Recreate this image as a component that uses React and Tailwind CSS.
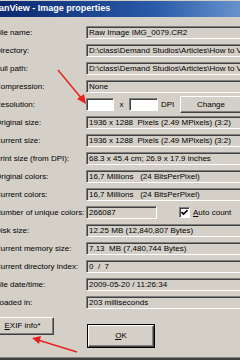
import React from 'react';

const rows = [
  { label: 'File name:', value: 'Raw Image IMG_0079.CR2' },
  { label: 'Directory:', value: 'D:\\class\\Demand Studios\\Articles\\How to View EXIF Data\\' },
  { label: 'Full path:', value: 'D:\\class\\Demand Studios\\Articles\\How to View EXIF Data\\IMG_0079.CR2' },
  { label: 'Compression:', value: 'None' },
  { label: 'Resolution:', type: 'dpi' },
  { label: 'Original size:', value: '1936 x 1288  Pixels (2.49 MPixels) (3:2)' },
  { label: 'Current size:', value: '1936 x 1288  Pixels (2.49 MPixels) (3:2)' },
  { label: 'Print size (from DPI):', value: '68.3 x 45.4 cm; 26.9 x 17.9 inches' },
  { label: 'Original colors:', value: '16,7 Millions   (24 BitsPerPixel)' },
  { label: 'Current colors:', value: '16,7 Millions   (24 BitsPerPixel)' },
  { label: 'Number of unique colors:', type: 'unique' },
  { label: 'Disk size:', value: '12.25 MB (12,840,807 Bytes)' },
  { label: 'Current memory size:', value: '7.13  MB (7,480,744 Bytes)' },
  { label: 'Current directory index:', value: '0  /  7' },
  { label: 'File date/time:', value: '2009-05-20 / 11:26:34' },
  { label: 'Loaded in:', value: '203 milliseconds' },
];

const sunken =
  'h-[13px] border border-t-[#808080] border-l-[#808080] border-b-white border-r-white shadow-[inset_1px_1px_0_#404040] flex items-center pl-[2px] whitespace-pre overflow-hidden';

const raised =
  'border border-t-white border-l-white border-r-[#404040] border-b-[#404040] shadow-[inset_-1px_-1px_0_#808080] flex items-center justify-center bg-[#d4d0c8]';

const Field = ({ value, white, className = '' }) => (
  <div className={`${sunken} ${white ? 'bg-white' : 'bg-[#d4d0c8]'} ${className}`}>{value}</div>
);

const Row = ({ row }) => {
  let content;
  if (row.type === 'dpi') {
    content = (
      <div className="flex items-center h-[13px]">
        <Field white className="w-[28px]" />
        <span className="w-[15px] text-center">x</span>
        <Field white className="w-[29px]" />
        <span className="ml-[3px] w-[17px]">DPI</span>
        <div className={`${raised} ml-[2px] w-[62px] h-[17px]`}>Change</div>
      </div>
    );
  } else if (row.type === 'unique') {
    content = (
      <div className="flex items-center h-[13px]">
        <Field value="266087" className="w-[71px]" />
        <div className="ml-[22px] w-[11px] h-[11px] bg-white border border-t-[#808080] border-l-[#808080] border-b-white border-r-white shadow-[inset_1px_1px_0_#404040] flex items-center justify-center">
          <svg width="7" height="7" viewBox="0 0 7 7">
            <path d="M0.5 3 L2.5 5 L6.5 1" stroke="#000" strokeWidth="1.6" fill="none" />
          </svg>
        </div>
        <span className="ml-[3px]"><span className="underline">A</span>uto count</span>
      </div>
    );
  } else {
    content = <Field value={row.value} className="flex-1" />;
  }
  return (
    <div className="flex items-center h-[13px]">
      <div className="w-[91px] shrink-0 whitespace-nowrap">{row.label}</div>
      <div className="flex-1 flex">{content}</div>
    </div>
  );
};

const App = () => {
  return (
    <div
      className="relative w-[240px] h-[360px] overflow-hidden bg-[#d4d0c8] text-[8px] text-black"
      style={{ fontFamily: '"Liberation Sans", Arial, sans-serif' }}
    >
      <div className="ml-[-16px] w-[340px] flex flex-col">
        <div className="h-[1px] bg-[#d4d0c8]" />
        <div className="h-[16px] bg-gradient-to-r from-[#0a246a] via-[#2a5aa8] to-[#a6caf0] flex items-center pl-[6px]">
          <span className="text-white font-bold text-[9px] whitespace-nowrap">IrfanView - Image properties</span>
        </div>

        <div className="flex flex-col gap-[5px] mt-[9px] pl-[11px] pr-[6px]">
          {rows.map((r) => (
            <Row key={r.label} row={r} />
          ))}
        </div>

        <div className="flex items-start pl-[7px]">
          <div className={`${raised} mt-[8px] w-[63px] h-[18px]`}>
            <span><span className="underline">E</span>XIF info*</span>
          </div>
          <div className="mt-[15px] ml-[33px] border border-black">
            <div className={`${raised} w-[66px] h-[22px]`}>
              <span><span className="underline">O</span>K</span>
            </div>
          </div>
        </div>
      </div>

      <div className="absolute left-0 right-0 top-[357px] h-[1px] bg-[#808080]" />
      <div className="absolute left-0 right-0 top-[358px] h-[2px] bg-[#404040]" />

      <svg className="absolute inset-0 pointer-events-none" width="240" height="360" viewBox="0 0 240 360">
        <line x1="58" y1="70" x2="82" y2="99" stroke="#e8231f" strokeWidth="1.5" />
        <path d="M86 104 L77 99 L84 94 Z" fill="#e8231f" />
        <line x1="77" y1="352" x2="38" y2="340" stroke="#e8231f" strokeWidth="1.5" />
        <path d="M32 338 L41 336 L39 344 Z" fill="#e8231f" />
      </svg>
    </div>
  );
};

export default App;
